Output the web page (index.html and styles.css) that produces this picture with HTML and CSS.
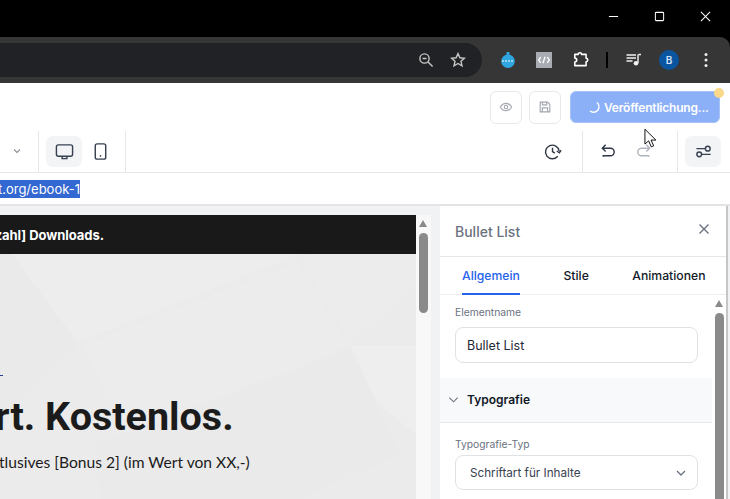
FILE: index.html
```html
<!DOCTYPE html>
<html lang="de">
<head>
<meta charset="utf-8">
<title>Editor</title>
<link rel="stylesheet" href="styles.css">
</head>
<body>
<div class="titlebar">
  <svg class="win" viewBox="0 0 12 12"><path d="M1 6h10" /></svg>
  <svg class="win" viewBox="0 0 12 12"><rect x="1.5" y="1.5" width="9" height="9" rx="1"/></svg>
  <svg class="win" viewBox="0 0 12 12"><path d="M1 1l10 10M11 1L1 11"/></svg>
</div>
<div class="chrome">
  <div class="omnibox">
    <svg class="omni-ico" viewBox="0 0 16 16"><circle cx="6.5" cy="6.5" r="4.6"/><path d="M10 10l4.6 4.6M4.5 6.5h4"/></svg>
    <svg class="omni-ico" viewBox="0 0 16 16"><path d="M8 1.6l1.9 4.2 4.5.5-3.4 3 1 4.500L8 11.500l-4 2.300 1-4.500-3.400-3 4.500-.5z"/></svg>
  </div>
  <div class="ext-group">
    <svg class="ext" viewBox="0 0 16 16"><rect class="drop" x="6.500" y="0" width="3" height="3.500"/><circle class="drop" cx="8" cy="9.200" r="6.800"/><path class="dash" d="M2 9h12"/></svg>
    <svg class="ext code" viewBox="0 0 16 16"><rect width="16" height="16" fill="#a9acb3"/><path d="M4.800 5.200L2.600 8l2.200 2.800M11.200 5.200L13.400 8l-2.200 2.800M9 4.800L7 11.200"/></svg>
    <svg class="ext puzzle" viewBox="0 0 16 16"><path d="M2.500 3.500h3a1.500 1.500 0 0 1 3 0h4v3.500a1.500 1.500 0 0 1 0 3v3.500h-10v-3.300a1.700 1.700 0 0 0 0-3.400z" transform="translate(0 -.5)"/></svg>
    <span class="sep-dark"></span>
    <svg class="ext media" viewBox="0 0 16 16"><path d="M.5 3h9.500M.5 6h9.500M.5 9h6"/><path class="note" d="M12.500 2.500h2.500M12 2.500v8.500"/><circle cx="10" cy="11.300" r="2.300"/></svg>
    <span class="avatar">B</span>
    <svg class="ext kebab" viewBox="0 0 4 16"><circle cx="2" cy="2.500" r="1.500"/><circle cx="2" cy="8" r="1.500"/><circle cx="2" cy="13.500" r="1.500"/></svg>
  </div>
</div>
<div class="app">
  <header class="actions">
    <button class="square eye"><svg viewBox="0 0 16 16"><path d="M1.500 8S4 3.800 8 3.800 14.500 8 14.500 8 12 12.200 8 12.200 1.500 8 1.500 8z"/><circle cx="8" cy="8" r="2"/></svg></button>
    <button class="square save"><svg viewBox="0 0 16 16"><path d="M2.500 2.500h8.500l2.500 2.500v8.500h-11z"/><path d="M5 2.500v3h5v-3M5 13.500V9h6v4.500"/></svg></button>
    <button class="publish">
      <svg class="spinner" viewBox="0 0 12 12"><path d="M9 1.500A5 5 0 0 1 2 10"/></svg>
      <span>Veröffentlichung...</span>
      <i class="badge"></i>
    </button>
  </header>
  <div class="toolbar">
    <svg class="mini-chev" viewBox="0 0 10 10"><path d="M2 3.500L5 6.500 8 3.500"/></svg>
    <div class="devices">
      <button class="tool active"><svg viewBox="0 0 20 20"><rect x="1.500" y="3" width="17" height="12" rx="2"/><path d="M7.500 15.500v2h5v-2"/></svg></button>
      <button class="tool"><svg viewBox="0 0 20 20"><rect x="4.500" y="2" width="11" height="16" rx="2"/><circle class="dot" cx="10" cy="14.500" r=".9"/></svg></button>
    </div>
    <div class="tool-right">
      <button class="tool plain"><svg viewBox="0 0 20 20"><path d="M17 9.500A7.200 7.200 0 1 0 15.500 15"/><path d="M10 6v4.200l2.500 1.500"/><path d="M14.500 9.500l2.700 1.800 1.800-2.600"/></svg></button>
      <div class="history">
        <button class="tool plain"><svg viewBox="0 0 20 20"><path d="M7 3L3.500 6.500 7 10"/><path d="M4 6.500h8a3.800 3.800 0 0 1 0 8H4.500v1"/></svg></button>
        <button class="tool plain off"><svg viewBox="0 0 20 20"><path d="M13 3l3.500 3.500L13 10"/><path d="M16 6.500H8a3.800 3.800 0 0 0 0 8h7.500v1"/></svg></button>
      </div>
      <div class="settings">
        <button class="tool active"><svg viewBox="0 0 20 20"><circle cx="5.500" cy="13" r="2.500"/><circle cx="14.500" cy="7" r="2.500"/><path d="M2.500 7h9.500M8 13h9.500"/></svg></button>
      </div>
    </div>
  </div>
  <div class="urlrow"><span class="url">t.org/ebook-1</span></div>
  <main class="workspace">
    <section class="canvas">
      <div class="page">
        <div class="notice"><span>[Anzahl] Downloads.</span></div>
        <div class="hero">
          <svg class="facets" viewBox="0 0 416 245" preserveAspectRatio="none" aria-hidden="true">
            <path fill="#eaeaea" d="M0 0H12L78 92 0 165z"/>
            <path fill="#ededed" d="M12 0H300L78 88z"/>
            <path fill="#ececec" d="M297 9L348 91 140 195 82 92z"/>
            <path fill="#eeeeee" d="M350 91H416V180L378 150z"/>
            <path fill="#ececec" d="M300 5L350 88 416 30V0H310z"/>
            <path fill="#eaeaea" d="M95 190L348 95 400 200 300 245H100z"/>
          </svg>
          <span class="link-stub"></span>
          <h1>rt. Kostenlos.</h1>
          <p>tlusives [Bonus 2] (im Wert von XX,-)</p>
        </div>
      </div>
      <div class="scrollbar page-scroll"><i class="arrow"></i><i class="thumb"></i></div>
    </section>
    <aside class="panel">
      <div class="panel-head">
        <h2>Bullet List</h2>
        <svg class="close" viewBox="0 0 12 12"><path d="M1.500 1.500l9 9M10.500 1.500l-9 9"/></svg>
      </div>
      <nav class="tabs">
        <a class="tab current">Allgemein</a>
        <a class="tab">Stile</a>
        <a class="tab">Animationen</a>
      </nav>
      <div class="panel-body">
        <div class="panel-scroll">
          <div class="field name-field">
            <label>Elementname</label>
            <div class="input">Bullet List</div>
          </div>
          <div class="section-head">
            <svg viewBox="0 0 12 12"><path d="M1.500 4l4.500 4.500L10.500 4"/></svg>
            <span>Typografie</span>
          </div>
          <div class="field type-field">
            <label>Typografie-Typ</label>
            <div class="input select">
              <span>Schriftart für Inhalte</span>
              <svg viewBox="0 0 12 12"><path d="M2 4l4 4 4-4"/></svg>
            </div>
          </div>
        </div>
        <div class="scrollbar panel-bar"><i class="arrow"></i><i class="thumb"></i></div>
      </div>
    </aside>
  </main>
</div>
<svg class="cursor" viewBox="0 0 14 22"><path d="M1 1v16l4-3.500 2.800 6.500 2.600-1.100-2.800-6.200h5.200z"/></svg>
</body>
</html>
```
FILE: styles.css
```css
* { box-sizing: border-box; }
html, body { margin: 0; padding: 0; }
body {
  width: 730px;
  height: 499px;
  overflow: hidden;
  position: relative;
  background: #000;
  font-family: Inter, "Liberation Sans", sans-serif;
}
button { border: 0; background: none; padding: 0; font: inherit; }

.titlebar {
  height: 37px;
  background: #000;
  display: flex;
  justify-content: flex-end;
  align-items: center;
  padding: 0 19px 4px 0;
  gap: 35px;
}
.win { width: 11px; height: 11px; fill: none; stroke: #fff; stroke-width: 1.100; }

.chrome {
  height: 46px;
  background: #363636;
  border-top-right-radius: 10px;
  display: flex;
  align-items: center;
}
.omnibox {
  width: 482px;
  height: 34px;
  background: #212225;
  border-radius: 0 17px 17px 0;
  display: flex;
  justify-content: flex-end;
  align-items: center;
  gap: 16px;
  padding-right: 16px;
}
.omni-ico { width: 16px; height: 16px; fill: none; stroke: #c7c7c7; stroke-width: 1.400; }
.ext-group {
  flex: 1;
  display: flex;
  align-items: center;
  padding-left: 18px;
}
.ext { width: 16px; height: 16px; flex: none; }
.drop { fill: #2fa6df; }
.dash { stroke: #fff; stroke-width: 1.200; stroke-dasharray: 2 1; }
.code { margin-left: 20px; }
.code path { fill: none; stroke: #fff; stroke-width: 1.300; }
.puzzle { width: 18px; height: 18px; margin-left: 20px; }
.puzzle path { fill: none; stroke: #fff; stroke-width: 1.400; stroke-linejoin: round; }
.sep-dark { width: 2px; height: 16px; background: #000; margin-left: 16px; }
.media { margin-left: 18px; }
.media path { fill: none; stroke: #f1f1f1; stroke-width: 1.400; }
.media circle { fill: #f1f1f1; }
.avatar {
  width: 20px;
  height: 20px;
  margin-left: 17px;
  border-radius: 50%;
  background: #0a559f;
  color: #cfe3f8;
  font-size: 10px;
  font-weight: 600;
  display: flex;
  align-items: center;
  justify-content: center;
}
.kebab { width: 4px; margin-left: 25px; fill: #eee; }

.app {
  height: 416px;
  background: #fff;
  display: flex;
  flex-direction: column;
}
.actions {
  height: 48px;
  flex: none;
  display: flex;
  justify-content: flex-end;
  align-items: center;
  padding: 0 10px 0 0;
  gap: 8px;
}
.square {
  width: 32px;
  height: 33px;
  border: 1px solid #e7e8eb;
  border-radius: 6px;
  display: flex;
  align-items: center;
  justify-content: center;
}
.square svg { width: 14px; height: 14px; fill: none; stroke: #a2a6ae; stroke-width: 1.300; }
.save { margin-left: -1px; }
.publish {
  position: relative;
  width: 150px;
  height: 32px;
  margin-left: 1px;
  border-radius: 6px;
  border: 1px solid #a6c2f8;
  background: #8cb0f7;
  color: #fff;
  font-size: 12px;
  font-weight: 600;
  letter-spacing: -.2px;
  display: flex;
  align-items: center;
  padding-left: 17px;
  gap: 4px;
}
.spinner { width: 12px; height: 12px; fill: none; stroke: #fff; stroke-width: 1.300; flex: none; }
.publish span { white-space: nowrap; }
.badge {
  position: absolute;
  top: -4px;
  right: -5px;
  width: 10px;
  height: 10px;
  border-radius: 50%;
  background: #fbd98a;
}

.toolbar {
  height: 42px;
  flex: none;
  display: flex;
  align-items: stretch;
  border-bottom: 1px solid #e5e7eb;
  position: relative;
}
.mini-chev { width: 10px; height: 10px; margin: 15px 0 0 12px; fill: none; stroke: #8a8f98; stroke-width: 1.100; flex: none; }
.devices {
  margin-left: 16px;
  width: 88px;
  padding: 5px 0 0 7px;
  display: flex;
  border-left: 1px solid #e5e7eb;
  border-right: 1px solid #e5e7eb;
  height: 41px;
}
.tool {
  width: 36px;
  height: 31px;
  border-radius: 7px;
  display: flex;
  align-items: center;
  justify-content: center;
}
.tool svg { width: 19px; height: 19px; fill: none; stroke: #374151; stroke-width: 1.500; }
.tool .dot { fill: #374151; stroke: none; }
.tool.active { background: #f3f4f6; }
.tool.plain svg { stroke: #2f3745; }
.tool.off { margin-left: -1px; }
.tool.off svg { stroke: #b0b5bd; }
.tool-right {
  margin-left: auto;
  display: flex;
  align-items: stretch;
}
.tool-right > .tool { margin-top: 5px; margin-right: 12px; }
.history {
  display: flex;
  border-left: 1px solid #e5e7eb;
  padding: 5px 0 0 7px;
  width: 95px;
}
.settings {
  border-left: 1px solid #e5e7eb;
  padding: 5px 9px 0 7px;
}

.urlrow {
  height: 33px;
  flex: none;
  border-bottom: 2px solid #e4e4e6;
  display: flex;
  align-items: center;
}
.url {
  background: #3367d1;
  color: #fff;
  font-family: Inter, sans-serif;
  font-size: 13px;
  line-height: 18px;
  width: 80px;
  white-space: nowrap;
  display: flex;
  justify-content: flex-end;
}

.workspace {
  flex: 1;
  min-height: 0;
  display: flex;
  background: #f1f2f4;
}
.canvas {
  width: 431px;
  flex: none;
  display: flex;
  padding-top: 9px;
  margin-right: 9px;
}
.page { width: 416px; flex: none; display: flex; flex-direction: column; }
.notice {
  height: 39px;
  flex: none;
  background: #191919;
  color: #fff;
  font-size: 13px;
  font-weight: 700;
  letter-spacing: -.05px;
  display: flex;
  align-items: center;
  justify-content: flex-end;
  padding-right: 312px;
  overflow: hidden;
  white-space: nowrap;
}
.hero {
  flex: 1;
  position: relative;
  background: #ebebeb;
  overflow: hidden;
  color: #1b1b1b;
}
.facets { position: absolute; inset: 0; width: 100%; height: 100%; }
.link-stub { position: absolute; left: 0; top: 121px; width: 3px; height: 1px; background: #2b3a9a; }
.hero h1 {
  position: relative;
  margin: 0;
  padding-top: 140px;
  font-family: Roboto, sans-serif;
  font-size: 39.500px;
  line-height: 46px;
  font-weight: 700;
  margin-left: -5px;
  white-space: nowrap;
}
.hero p {
  position: relative;
  margin: 0;
  padding-top: 12px;
  font-family: Lato, sans-serif;
  font-size: 15.600px;
  line-height: 20px;
  white-space: nowrap;
  margin-left: -1px;
}
.scrollbar { position: relative; background: #f8f8f8; flex: none; width: 15px; }
.arrow {
  position: absolute;
  top: 5px;
  left: 3px;
  width: 0;
  height: 0;
  border-left: 4.500px solid transparent;
  border-right: 4.500px solid transparent;
  border-bottom: 7px solid #8a8a8a;
}
.thumb {
  position: absolute;
  top: 18px;
  left: 3px;
  width: 9px;
  height: 80px;
  border-radius: 5px;
  background: #8a8a8a;
}

.panel {
  flex: none;
  width: 288px;
  background: #fff;
  border-right: 2px solid #c6c6c6;
  display: flex;
  flex-direction: column;
  min-height: 0;
}
.panel-head {
  height: 51px;
  flex: none;
  border-bottom: 1px solid #e5e7eb;
  display: flex;
  align-items: center;
  justify-content: space-between;
  padding: 0 16px 0 15px;
}
.panel-head h2 {
  margin: 0;
  font-size: 14px;
  font-weight: 500;
  color: #6b7280;
}
.close { width: 12px; height: 12px; margin-top: -4px; fill: none; stroke: #6b7280; stroke-width: 1.400; }
.tabs {
  height: 38px;
  flex: none;
  display: flex;
  border-bottom: 1px solid #eceef1;
  padding-left: 22px;
  gap: 43.500px;
  font-size: 12.200px;
  font-weight: 500;
  color: #111827;
}
.tab { padding-top: 11px; height: 38px; }
.tab.current { color: #2563eb; border-bottom: 2px solid #2563eb; width: 58px; }
.panel-body { flex: 1; min-height: 0; display: flex; overflow: hidden; }
.panel-scroll { flex: none; width: 272px; }
.field { padding: 0 15px; }
.name-field { padding-top: 11px; padding-bottom: 15px; }
.field label {
  display: block;
  font-size: 10.300px;
  line-height: 13px;
  color: #6b7280;
}
.input {
  width: 243px;
  height: 36px;
  margin-top: 8px;
  border: 1px solid #e0e2e6;
  border-radius: 8px;
  font-size: 12.500px;
  color: #1f2937;
  display: flex;
  align-items: center;
  padding: 1px 0 0 11px;
}
.section-head {
  height: 45px;
  background: #f8f9fb;
  border-bottom: 1px solid #e5e7eb;
  display: flex;
  align-items: center;
  padding: 0 0 2px 8px;
  gap: 8px;
  font-size: 12px;
  font-weight: 600;
  color: #111827;
}
.section-head svg { width: 11px; height: 11px; fill: none; stroke: #6b7280; stroke-width: 1.200; }
.type-field { padding-top: 15px; }
.type-field .input { margin-top: 4px; height: 35px; }
.select {
  justify-content: space-between;
  padding: 0 10px 0 14px;
  font-size: 11.700px;
  color: #374151;
}
.select svg { width: 12px; height: 12px; fill: none; stroke: #6b7280; stroke-width: 1.300; }
.panel-bar { width: 13px; margin-left: 3px; background: #fff; }
.panel-bar .arrow { left: 0; }
.panel-bar .thumb { left: 0; height: 300px; }

.cursor {
  position: absolute;
  left: 644px;
  top: 128px;
  width: 13px;
  height: 21px;
  fill: #fff;
  stroke: #000;
  stroke-width: 1;
}
```
